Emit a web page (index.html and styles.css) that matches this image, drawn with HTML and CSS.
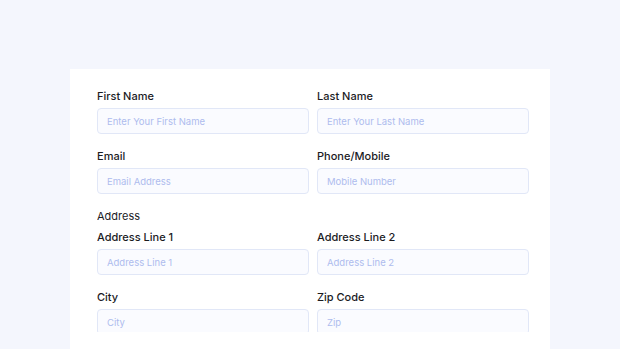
FILE: index.html
```html
<!DOCTYPE html>
<html lang="en">
<head>
  <meta charset="UTF-8" />
  <title>Contact Details Form</title>
  <link rel="stylesheet" href="styles.css">
</head>
<body>
  <div class="form-card">
    <form class="details-form">
      <div class="field">
        <label for="first-name">First Name</label>
        <input type="text" id="first-name" placeholder="Enter Your First Name">
      </div>
      <div class="field">
        <label for="last-name">Last Name</label>
        <input type="text" id="last-name" placeholder="Enter Your Last Name">
      </div>
      <div class="field">
        <label for="email">Email</label>
        <input type="email" id="email" placeholder="Email Address">
      </div>
      <div class="field">
        <label for="phone">Phone/Mobile</label>
        <input type="tel" id="phone" placeholder="Mobile Number">
      </div>

      <div class="section-title">Address</div>

      <div class="field">
        <label for="address-1">Address Line 1</label>
        <input type="text" id="address-1" placeholder="Address Line 1">
      </div>
      <div class="field">
        <label for="address-2">Address Line 2</label>
        <input type="text" id="address-2" placeholder="Address Line 2">
      </div>
      <div class="field">
        <label for="city">City</label>
        <input type="text" id="city" placeholder="City">
      </div>
      <div class="field">
        <label for="zip">Zip Code</label>
        <input type="text" id="zip" placeholder="Zip">
      </div>
    </form>
  </div>
</body>
</html>
```

FILE: styles.css
```css
html, body {
  margin: 0;
  height: 100%;
  overflow: hidden;
}

body {
  background: #f4f6fd;
  font-family: Inter, "Noto Sans", sans-serif;
  color: #1b1b1f;
}

.form-card {
  width: 432px;
  height: 261px;
  margin: 69px auto 0;
  padding: 19px 21px 0 27px;
  background: #ffffff;
}

/* the form is cut off by its own box, like a scroll area */
.details-form {
  height: 244px;
  overflow: hidden;
  display: grid;
  grid-template-columns: 1fr 1fr;
  column-gap: 8px;
  row-gap: 14px;
  align-content: start;
}

.field {
  display: flex;
  flex-direction: column;
  gap: 4px;
}

.field label {
  font-size: 11px;
  line-height: 16px;
  font-weight: 500;
}

.section-title {
  grid-column: 1 / -1;
  font-size: 11px;
  line-height: 16px;
  font-weight: 400;
  margin-bottom: -9px;
}

.field input {
  box-sizing: border-box;
  height: 26px;
  padding: 0 9px;
  border: 1px solid #e1e7f7;
  border-radius: 4px;
  background: #fafbff;
  font-family: inherit;
  font-size: 9.5px;
  color: #1b1b1f;
  outline: none;
}

.field input::placeholder {
  color: #aebbee;
}
```
